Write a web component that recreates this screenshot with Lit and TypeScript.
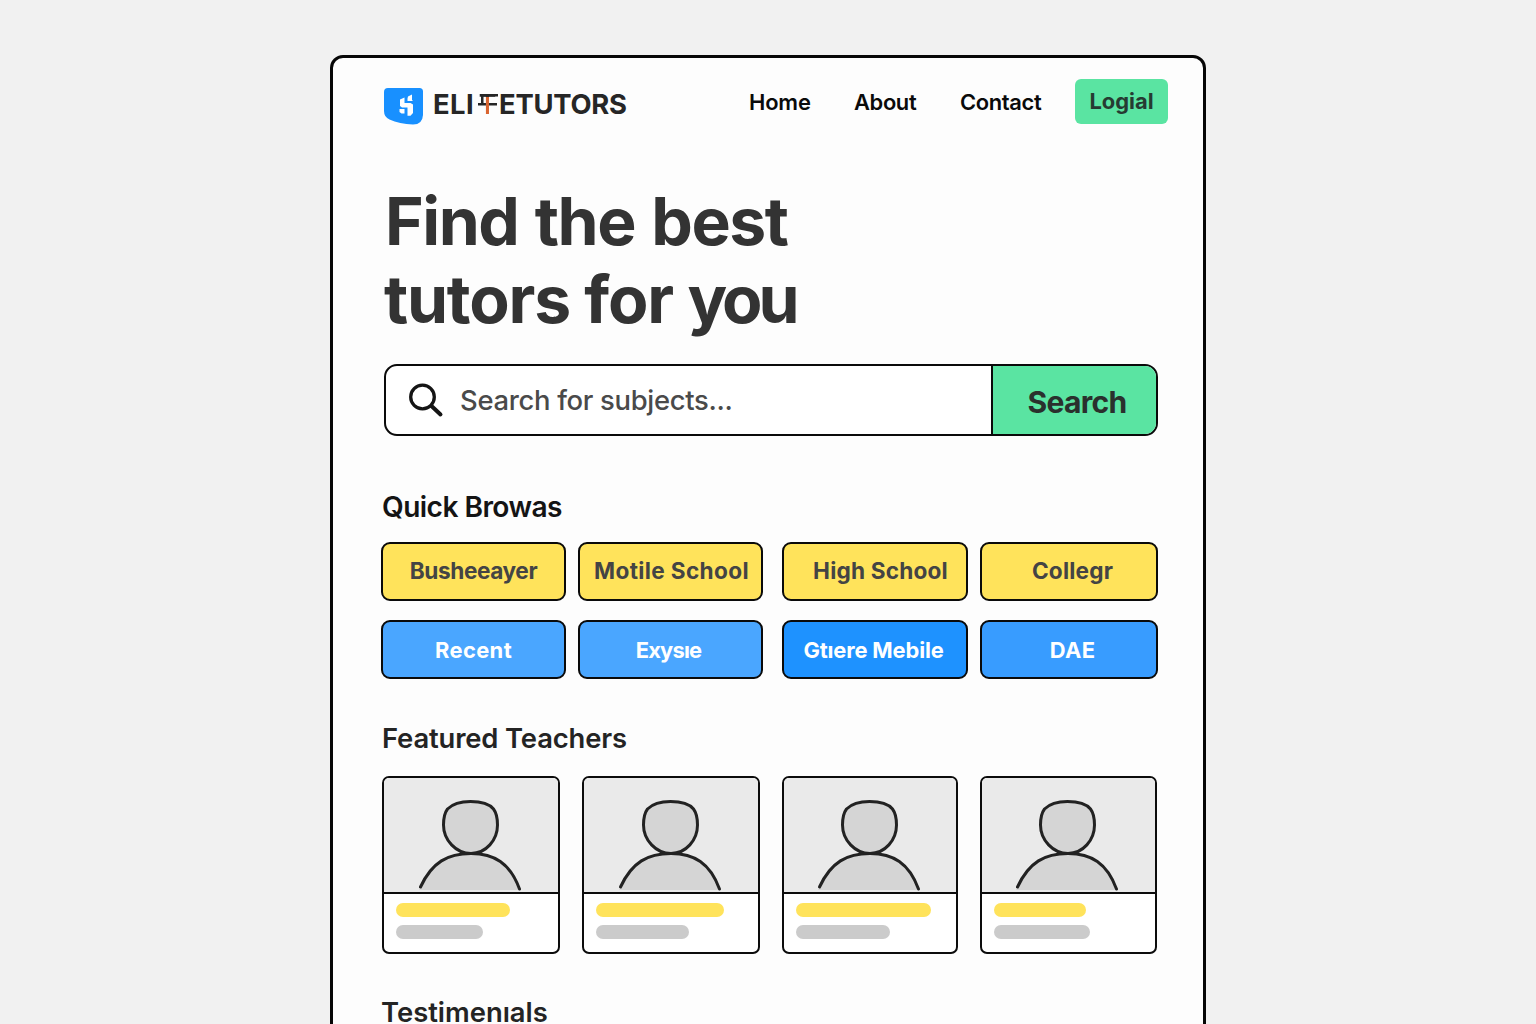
import { LitElement, html, css, svg } from "lit";
import { customElement, property } from "lit/decorators.js";
import { classMap } from "lit/directives/class-map.js";
import { styleMap } from "lit/directives/style-map.js";

interface Chip {
  label: string;
  tone: "yellow" | "sky" | "blue" | "azure";
  tracking: number;
  shift?: number;
}

const CHIPS: Chip[] = [
  { label: "Busheeayer", tone: "yellow", tracking: -0.4 },
  { label: "Motile School", tone: "yellow", tracking: 0.35, shift: 2 },
  { label: "High School", tone: "yellow", tracking: 0.2, shift: 11 },
  { label: "Collegr", tone: "yellow", tracking: 0.2, shift: 7 },
  { label: "Recent", tone: "sky", tracking: 0.4 },
  { label: "Exysıe", tone: "sky", tracking: -0.8, shift: -4 },
  { label: "Gtıere Mebile", tone: "blue", tracking: -0.15, shift: -3 },
  { label: "DAE", tone: "azure", tracking: 0.38, shift: 7 },
];

const TEACHERS = [
  { name: 114, subject: 87 },
  { name: 128, subject: 93 },
  { name: 135, subject: 94 },
  { name: 92, subject: 96 },
];

@customElement("teacher-card")
class TeacherCard extends LitElement {
  @property({ type: Number }) name = 100;
  @property({ type: Number }) subject = 90;

  static styles = css`
    :host {
      display: flex;
      flex-direction: column;
      box-sizing: border-box;
      height: 178px;
      border: 2.5px solid #0c0c0c;
      border-radius: 7px;
      background: #fff;
      overflow: hidden;
    }
    .photo {
      height: 114px;
      background: #eaeaea;
      border-bottom: 2px solid #0c0c0c;
      display: flex;
      justify-content: center;
    }
    .person {
      width: 110px;
      height: 114px;
      flex: none;
    }
    .lines {
      display: flex;
      flex-direction: column;
      gap: 8px;
      padding: 9px 12px 0;
    }
    .bar {
      height: 14px;
      border-radius: 7px;
    }
    .bar.name {
      background: #ffe35b;
    }
    .bar.subject {
      background: #cbcbcb;
    }
  `;

  render() {
    return html`
      <div class="photo">
        <svg class="person" viewBox="0 0 110 114" fill="#d5d5d5" stroke="#222" stroke-width="3" stroke-linecap="round">
          <path stroke="none" d="M5 109C17 83 35 75 55 75S93 83 104 112H3Z" />
          <path fill="none" d="M4.500 109C16 84 32 75.500 55 75.500S94 85 103.500 111" />
          <path d="M54.500 23.500C64 23.500 73 25.500 77.500 31C80.500 35 81.500 41 81.500 47C81.500 62 70 75.500 55 75.500C40 75.500 27.500 62 27.500 47C27.500 41 28.500 35 31.500 31C36 26.500 45 23.500 54.500 23.500Z" />
        </svg>
      </div>
      <div class="lines">
        <div class="bar name" style=${styleMap({ width: this.name + "px" })}></div>
        <div class="bar subject" style=${styleMap({ width: this.subject + "px" })}></div>
      </div>
    `;
  }
}

const logo = svg`
  <path fill="#1890ff" d="M4 0H35.500Q39 0 39 3.500V27Q38.500 36.500 29 36.500C20 36 12 34.500 5.500 31.500Q0 29 0 23V4Q0 0 4 0Z" />
  <path fill="#fff" d="M24 8.500L28 6.500V12L29 13H23.500V10.500ZM16 11.500L20.500 9.500V15H26.500L29 16.500V25L26.500 27.800H23.500V19.500H18L16 18ZM15.500 21H20.500V25.500H17.500L15.500 24Z" />
`;

@customElement("app-root")
class AppRoot extends LitElement {
  static styles = css`
    :host {
      display: block;
      height: 1024px;
      overflow: hidden;
      background: #f1f1f1;
      font-family: Inter, "Liberation Sans", sans-serif;
      color: #222;
    }
    .frame {
      box-sizing: border-box;
      width: 876px;
      height: 1100px;
      margin: 55px 0 0 330px;
      padding: 21px 35px 0 48px;
      border: 3px solid #060606;
      border-radius: 13px;
      background: #fdfdfd;
    }
    :host::before {
      content: "";
      display: table;
    }
    header {
      display: flex;
      align-items: center;
      height: 45px;
      padding-left: 3px;
    }
    .logo {
      width: 39px;
      height: 37px;
      margin: 9px 9px 0 0;
      flex: none;
    }
    .brand {
      display: flex;
      font-size: 27.4px;
      font-weight: 650;
      line-height: 34px;
      margin-top: 4px;
      padding-left: 1px;
      color: #262626;
    }
    .eli {
      width: 43px;
      letter-spacing: 0.4px;
    }
    .mark {
      width: 23px;
      text-align: center;
      background:
        linear-gradient(#262626, #262626) 2px 16px / 19px 2.500px no-repeat,
        linear-gradient(#262626, #262626) 5px 7px / 17px 2.500px no-repeat,
        linear-gradient(#262626, #262626) 5px 9px / 2.500px 7px no-repeat;
    }
    .mark span {
      background: linear-gradient(#262626 10px, #d9642f 10px);
      -webkit-background-clip: text;
      background-clip: text;
      color: transparent;
      font-weight: 500;
    }
    .tutors {
      letter-spacing: -0.25px;
    }
    nav {
      display: flex;
      align-items: center;
      margin-left: auto;
      font-size: 21.9px;
      font-weight: 600;
      line-height: 30px;
      color: #0a0a0a;
      white-space: nowrap;
    }
    .home {
      width: 105px;
      letter-spacing: -0.15px;
    }
    .about {
      width: 106px;
      letter-spacing: -0.35px;
    }
    .contact {
      width: 115px;
      letter-spacing: -0.33px;
    }
    .login {
      box-sizing: border-box;
      width: 93px;
      height: 45px;
      border-radius: 6px;
      background: #5ae4a2;
      color: #263b32;
      font-weight: 700;
      line-height: 45px;
      text-align: center;
    }
    h1 {
      margin: 58px 0 0 3px;
      font-size: 66px;
      font-weight: 700;
      line-height: 78px;
      color: #333;
      white-space: nowrap;
    }
    .line {
      display: block;
      padding-left: 1px;
      letter-spacing: -1.45px;
      word-spacing: 2px;
    }
    .line.second {
      padding-left: 0;
      letter-spacing: -1.2px;
      word-spacing: 0;
    }
    .you {
      letter-spacing: -4px;
    }
    .search {
      box-sizing: border-box;
      display: flex;
      width: 774px;
      height: 72px;
      margin: 26px 0 0 3px;
      border: 2.5px solid #0a0a0a;
      border-radius: 13px;
      background: #fff;
      overflow: hidden;
    }
    .field {
      display: flex;
      align-items: center;
      flex: 1;
      padding-left: 22px;
      color: #4a4a4a;
      font-size: 27.4px;
      font-weight: 500;
      letter-spacing: -0.3px;
    }
    .glass {
      width: 36px;
      height: 36px;
      margin: 2px 16px 0 0;
    }
    .go {
      box-sizing: border-box;
      width: 165px;
      padding: 3px 0 0 5px;
      border-left: 2.5px solid #0a0a0a;
      background: #5ae4a2;
      color: #2a302d;
      font-size: 30.1px;
      font-weight: 650;
      line-height: 67px;
      letter-spacing: -0.7px;
      text-align: center;
    }
    h2 {
      margin: 0;
      font-size: 27.4px;
      font-weight: 600;
      line-height: 34px;
      color: #242424;
    }
    .quick {
      margin-top: 54px;
      padding-left: 1px;
      font-size: 28.1px;
      letter-spacing: -0.55px;
      color: #141414;
    }
    .chips {
      display: grid;
      grid-template-columns: 185px 192px 186px 178px;
      gap: 19px 12px;
      margin-top: 18px;
    }
    .chip {
      box-sizing: border-box;
      height: 59px;
      border: 2.5px solid #0a0a0a;
      border-radius: 9px;
      font-size: 22.6px;
      font-weight: 700;
      line-height: 54px;
      text-align: center;
      white-space: nowrap;
    }
    .chip:nth-child(4n + 2) {
      width: 185px;
    }
    .yellow {
      background: #ffe35b;
      color: #444;
    }
    .sky,
    .blue,
    .azure {
      color: #fff;
      font-size: 21.9px;
      line-height: 57px;
    }
    .sky {
      background: #4aa6ff;
    }
    .blue {
      background: #1e92ff;
    }
    .azure {
      background: #389cff;
    }
    .featured {
      margin-top: 42px;
      padding-left: 1px;
      letter-spacing: -0.14px;
    }
    .teachers {
      display: grid;
      grid-template-columns: 178px 177.5px 176px 177px;
      gap: 22px;
      margin: 21px 0 0 1px;
    }
    .testimonials {
      margin-top: 41px;
    }
  `;

  render() {
    return html`
      <main class="frame">
        <header>
          <svg class="logo" viewBox="0 0 39 37">${logo}</svg>
          <div class="brand">
            <span class="eli">ELI</span><span class="mark"><span>T</span></span><span class="tutors">ETUTORS</span>
          </div>
          <nav>
            <span class="home">Home</span>
            <span class="about">About</span>
            <span class="contact">Contact</span>
            <span class="login">Logial</span>
          </nav>
        </header>
        <h1><span class="line">Find the best</span><span class="line second">tutors for <span class="you">you</span></span></h1>
        <div class="search">
          <div class="field">
            <svg class="glass" viewBox="0 0 36 36" fill="none" stroke="#151515" stroke-linecap="round">
              <circle cx="14.500" cy="14" r="11.800" stroke-width="3.300" />
              <path stroke-width="4" d="M23.500 23L32.500 31.500" />
            </svg>
            <span>Search for subjects...</span>
          </div>
          <div class="go">Search</div>
        </div>
        <h2 class="quick">Quick Browas</h2>
        <div class="chips">
          ${CHIPS.map(
            (c) => html`<div
              class=${classMap({ chip: true, [c.tone]: true })}
              style=${styleMap({ letterSpacing: c.tracking + "px", textIndent: (c.shift ?? 0) + "px" })}
            >${c.label}</div>`,
          )}
        </div>
        <h2 class="featured">Featured Teachers</h2>
        <div class="teachers">
          ${TEACHERS.map((t) => html`<teacher-card .name=${t.name} .subject=${t.subject}></teacher-card>`)}
        </div>
        <h2 class="testimonials">Testimenıals</h2>
      </main>
    `;
  }
}
